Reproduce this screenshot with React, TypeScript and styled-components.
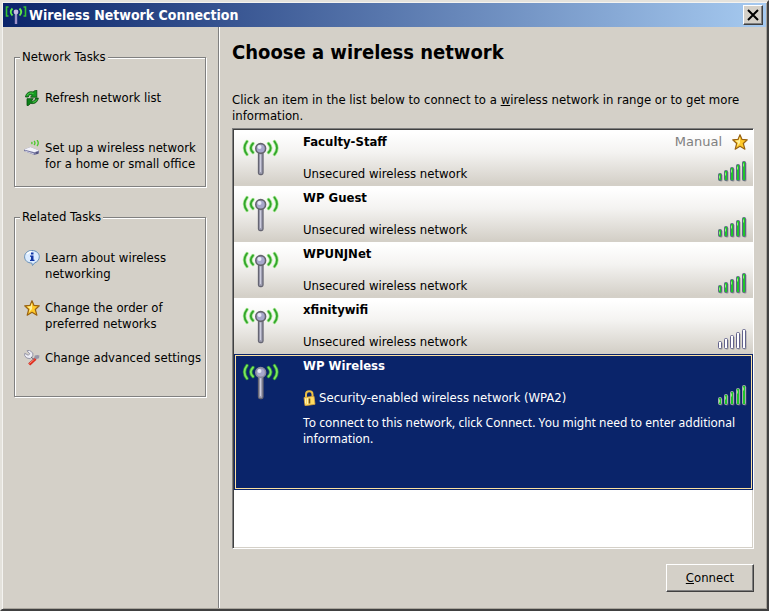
import React from "react";
import styled, { createGlobalStyle, css } from "styled-components";

const face = "#d4d0c8";
const navy = "#0a246a";

const GlobalStyle = createGlobalStyle`
  * { box-sizing: border-box; }
  body {
    margin: 0;
    background: ${face};
    color: #000;
    font: 13px/16px Tahoma, "DejaVu Sans Condensed", "DejaVu Sans", sans-serif;
  }
  h1, h2, p, ul { margin: 0; padding: 0; }
  ul { list-style: none; }
  button { font: inherit; color: inherit; }
  svg { display: block; flex: none; }
`;

const Window = styled.div`
  display: flex;
  flex-direction: column;
  min-height: 100vh;
  padding: 1px;
  background: ${face};
  border: 2px solid;
  border-color: #e4e2dc #404040 #404040 #e4e2dc;
  box-shadow: inset 1px 1px 0 #f4f3f0, inset -1px -1px 0 #a8a49c;
`;

const TitleBar = styled.header`
  display: flex;
  align-items: center;
  gap: 2px;
  height: 24px;
  padding: 0 3px 0 2px;
  color: #fff;
  background: linear-gradient(to right, ${navy}, #a6caf0);
`;

const WindowTitle = styled.h2`
  flex: 1;
  font-size: 14px;
  line-height: 20px;
  font-weight: bold;
`;

const raised = css`
  background: ${face};
  border: 1px solid;
  border-color: #fff #404040 #404040 #fff;
  box-shadow: inset -1px -1px 0 #808080;
`;

const CloseButton = styled.button`
  ${raised}
  display: grid;
  place-items: center;
  width: 20px;
  height: 20px;
  padding: 0;
  color: #000;
`;

const Body = styled.div`
  display: flex;
  flex: 1;
`;

const Sidebar = styled.aside`
  display: flex;
  flex-direction: column;
  gap: 22px;
  flex: none;
  width: 216px;
  padding: 22px 12px 0 11px;
  border-right: 1px solid #808080;
  box-shadow: 1px 0 0 #fff;
`;

const Group = styled.fieldset`
  min-width: 0;
  margin: 0;
  padding: 0 5px 14px;
  border: 1px solid #808080;
  box-shadow: 1px 1px 0 #fff, inset 1px 1px 0 #fff;
`;

const Legend = styled.legend`
  padding: 0 2px;
  background: ${face};
`;

const TaskList = styled.ul`
  display: flex;
  flex-direction: column;
  gap: 18px;
  && { padding: 25px 0 0 4px; }
`;

const TaskLink = styled.a`
  display: flex;
  align-items: flex-start;
  gap: 5px;
  min-height: 32px;
  color: inherit;
  text-decoration: none;
  white-space: pre;
`;

const Main = styled.main`
  display: flex;
  flex-direction: column;
  flex: 1;
  min-width: 0;
  padding: 13px 12px 16px 13px;
`;

const Heading = styled.h1`
  font-size: 20px;
  line-height: 24px;
  font-weight: bold;
`;

const Intro = styled.p`
  && { margin: 28px 0 4px; }
`;

const NetworkList = styled.ul`
  flex: 1;
  background: #fff;
  border: 1px solid;
  border-color: #808080 #fff #fff #808080;
  && { padding: 1px 0 0 1px; }
  box-shadow: inset 1px 1px 0 #404040, inset -1px -1px 0 ${face};
`;

const NetworkRow = styled.button<{ $selected?: boolean }>`
  display: grid;
  grid-template-columns: 61px 1fr auto;
  align-content: start;
  width: 100%;
  min-height: ${(p) => (p.$selected ? 136 : 56)}px;
  padding: 4px 6px 4px 8px;
  border: 0;
  text-align: left;
  background: linear-gradient(#fff 5%, #f4f3f1 40%, ${face} 96%);
  ${(p) =>
    p.$selected &&
    css`
      color: #fff;
      background: ${navy};
      outline: 1px solid #fbe0a0;
      outline-offset: -2px;
    `}
`;

const Antenna = styled.span`
  padding-top: 4px;
`;

const Summary = styled.span`
  display: flex;
  flex-direction: column;
  gap: 16px;
`;

const NetworkName = styled.strong`
  font-weight: bold;
`;

const Security = styled.span`
  display: flex;
  align-items: center;
  gap: 3px;
`;

const Status = styled.span`
  display: flex;
  flex-direction: column;
  align-items: flex-end;
  justify-content: space-between;
  height: 48px;
`;

const Preference = styled.span`
  display: flex;
  align-items: center;
  gap: 10px;
  min-height: 16px;
  margin-right: -1px;
  font-family: Verdana, "DejaVu Sans", sans-serif;
  color: #808080;
`;

const Description = styled.span`
  grid-column: 2 / -1;
  margin-top: 9px;
  font-family: "Noto Sans", sans-serif;
  font-size: 12px;
`;

const Actions = styled.footer`
  display: flex;
  justify-content: flex-end;
  padding-top: 15px;
`;

const PushButton = styled.button`
  ${raised}
  width: 88px;
  height: 28px;
  padding: 0;
`;

const WaveMark = () => (
  <svg width="22" height="20" viewBox="0 0 22 20" fill="none" aria-hidden="true">
    <path d="M3.500 2H1.500v9h2M18.500 2h2v9h-2" stroke="#35c432" strokeWidth="1.600" />
    <path d="M7.500 3.500Q4 7 7.500 10.500M14.500 3.500q3.500 3.500 0 7" stroke="#61e94a" strokeWidth="1.800" />
    <path d="M11 7v12" stroke="#9d91c9" strokeWidth="2.400" />
    <circle cx="11" cy="7" r="2.400" fill="#c9b9e4" />
  </svg>
);

const CloseMark = () => (
  <svg width="12" height="12" viewBox="0 0 12 12" aria-hidden="true">
    <path d="M1 1l10 10M11 1L1 11" stroke="#000" strokeWidth="2" />
  </svg>
);

const waves = "M5 3.500Q0 10 5 16.500M11 5.500q-4.500 4.500 0 9M32.500 3.500q5 6.500 0 13M26.500 5.500q4.500 4.500 0 9";

const AntennaIcon = ({ selected }: { selected?: boolean }) => (
  <svg width="38" height="38" viewBox="0 0 38 38" fill="none" aria-hidden="true">
    <path d={waves} stroke={selected ? "#2d8a3c" : "#a9e996"} strokeWidth="3.400" strokeLinecap="round" />
    <path d={waves} stroke={selected ? "#7be85a" : "#32a52b"} strokeWidth="1.800" strokeLinecap="round" />
    <rect x="16.500" y="14" width="4.500" height="22.500" rx="1.500" fill="#a0a0b4" stroke="#656572" strokeWidth="1.300" />
    <path d="M18.500 16v18" stroke="#cdcddd" />
    <circle cx="18.700" cy="10.500" r="4.900" fill="#a7a7cc" stroke={selected ? "#8a8a9c" : "#65656d"} strokeWidth="1.600" />
    <circle cx="17.500" cy="9" r="2" fill="#e8e8f6" />
  </svg>
);

const SignalIcon = ({ active, selected }: { active: boolean; selected?: boolean }) => (
  <svg width="30" height="22" viewBox="0 0 30 22" aria-hidden="true">
    {[0, 1, 2, 3, 4].map((i) => {
      const x = 1.5 + i * 6;
      const y = 13.5 - i * 3;
      const h = 7 + i * 3;
      return (
        <g key={i}>
          <rect x={x + 1} y={y + 1} width="3" height={h} rx="1" fill="#777" opacity=".6" />
          <rect x={x} y={y} width="3" height={h} rx="1" fill={active ? "#1fc52a" : "#fff"} stroke={selected ? "#aaa5b5" : "#62628b"} />
          {active && <path d={`M${x + 1} ${y + 2}v3`} stroke="#8af276" />}
        </g>
      );
    })}
  </svg>
);

const StarIcon = () => (
  <svg width="16" height="16" viewBox="0 0 16 16" aria-hidden="true">
    <path d="M8 .7l2 4.700 5.300.4-4 3.700 1.600 5.700L8 12.300l-4.800 2.900 1.500-5.700-4-3.700L6 5.400z" fill="#ffc928" stroke="#9a6311" strokeWidth="1.200" strokeLinejoin="round" />
    <path d="M8 2.800L6.700 6.300 3 6.700l3 2-1 3.500L8 9z" fill="#fff09a" />
  </svg>
);

const RefreshIcon = () => (
  <svg width="16" height="16" viewBox="0 0 16 16" aria-hidden="true">
    <g stroke="#064d0c" strokeWidth=".8" strokeLinejoin="round">
      <path d="M1.500 7C2 3 5.500.8 9 2l2.500-1.800h1.300v7H6.500L8.300 5C6 4.200 4.500 5 4.300 7z" fill="#159a22" />
      <path d="M14.300 8c-.4 4-4 6.500-7.500 5.300L4.300 15.500H3V8.700h6.300l-1.900 2.200c2 .8 3.700 0 4.100-2.900z" fill="#0c8118" />
    </g>
    <path d="M3 5.500C4 3 7 2.500 9.500 3.500M12.800 9.500c-.8 2-2.500 2.700-4 2.700" fill="none" stroke="#54cf50" />
  </svg>
);

const RouterIcon = () => (
  <svg width="16" height="16" viewBox="0 0 16 16" fill="none" aria-hidden="true">
    <path d="M10 1q2 2 0 4M13 0q2.500 3 0 6M7.500 2q1 1 0 2" stroke="#49c92c" strokeWidth="1.300" />
    <path d="M0 9.500L6.500 7l8.500 3.500v3L10.500 15 0 11z" fill="#7778a0" />
    <path d="M0 9.500L6.500 7l8.500 3.500-4.500 1.800z" fill="#f3f3fa" />
    <path d="M1 11l9 3" stroke="#c9c9de" />
    <path d="M12 13h2" stroke="#32325f" />
  </svg>
);

const InfoIcon = () => (
  <svg width="16" height="16" viewBox="0 0 16 16" aria-hidden="true">
    <path d="M8 .5c4.200 0 7.300 2.700 7.300 6.300 0 3-2.100 5.200-4.600 6L8.500 15.500 7.800 13C3.500 13 .6 10.400.6 6.800S3.800.5 8 .5z" fill="#dcecff" stroke="#668fb8" />
    <path d="M3 4Q5 1.500 8 1.500" fill="none" stroke="#fff" strokeWidth="1.500" />
    <path d="M7 2.500h2.500v2H7zM6 5.500h3.500v4.300h1V11H6V9.800h1V6.700H6z" fill="#1236a5" />
  </svg>
);

const ToolsIcon = () => (
  <svg width="16" height="16" viewBox="0 0 16 16" aria-hidden="true">
    <path d="M13.500 5l2 .5-.5 2.800-2.500.8-5.800 6L4.500 13l5.800-5.500.5-2z" fill="#9796a8" />
    <path d="M3 .8L5.500.3 8.800 3v3L6.200 8.700 2.700 8 .6 5.500l.2-2.200 3.500 2 1.500-1.500z" fill="#eeeef5" stroke="#85859b" strokeWidth=".8" />
    <path d="M10.500 8l2 1.700-6.300 5.700-2-1.800z" fill="#df291b" />
    <path d="M10.500 9l-5 4.500" stroke="#ff9074" />
    <path d="M7 7l3 2.500" stroke="#66657a" />
  </svg>
);

const LockIcon = () => (
  <svg width="13" height="16" viewBox="0 0 13 16" aria-hidden="true">
    <path d="M3 8V4.500C3 .3 9.500.3 9.500 4.500V7" fill="none" stroke="#e9be44" strokeWidth="2" />
    <path d="M1 7.500l10-1.200 1 8L2 15.700z" fill="#ffdb60" stroke="#d7a33c" strokeWidth=".8" />
    <path d="M2.500 8.500v5M4.500 8v6" stroke="#fff3af" />
    <path d="M6.500 8.500v5" stroke="#695122" strokeWidth="1.600" />
  </svg>
);

type Network = {
  name: string;
  active: boolean;
  manual?: boolean;
  selected?: boolean;
};

const networks: Network[] = [
  { name: "Faculty-Staff", active: true, manual: true },
  { name: "WP Guest", active: true },
  { name: "WPUNJNet", active: true },
  { name: "xfinitywifi", active: false },
  { name: "WP Wireless", active: true, selected: true },
];

const taskGroups = [
  {
    title: "Network Tasks",
    tasks: [
      { icon: <RefreshIcon />, label: "Refresh network list" },
      { icon: <RouterIcon />, label: "Set up a wireless network\nfor a home or small office" },
    ],
  },
  {
    title: "Related Tasks",
    tasks: [
      { icon: <InfoIcon />, label: "Learn about wireless\nnetworking" },
      { icon: <StarIcon />, label: "Change the order of\npreferred networks" },
      { icon: <ToolsIcon />, label: "Change advanced settings" },
    ],
  },
];

export default function App() {
  return (
    <>
      <GlobalStyle />
      <Window>
        <TitleBar>
          <WaveMark />
          <WindowTitle>Wireless Network Connection</WindowTitle>
          <CloseButton type="button" aria-label="Close">
            <CloseMark />
          </CloseButton>
        </TitleBar>
        <Body>
          <Sidebar>
            {taskGroups.map((group) => (
              <Group key={group.title}>
                <Legend>{group.title}</Legend>
                <TaskList>
                  {group.tasks.map((task) => (
                    <li key={task.label}>
                      <TaskLink href="#">
                        {task.icon}
                        <span>{task.label}</span>
                      </TaskLink>
                    </li>
                  ))}
                </TaskList>
              </Group>
            ))}
          </Sidebar>
          <Main>
            <Heading>Choose a wireless network</Heading>
            <Intro>
              Click an item in the list below to connect to a <u>w</u>ireless network in range or to get more information.
            </Intro>
            <NetworkList>
              {networks.map((n) => (
                <li key={n.name}>
                  <NetworkRow type="button" $selected={n.selected} aria-pressed={!!n.selected}>
                    <Antenna>
                      <AntennaIcon selected={n.selected} />
                    </Antenna>
                    <Summary>
                      <NetworkName>{n.name}</NetworkName>
                      <Security>
                        {n.selected && <LockIcon />}
                        {n.selected ? "Security-enabled wireless network (WPA2)" : "Unsecured wireless network"}
                      </Security>
                    </Summary>
                    <Status>
                      <Preference>
                        {n.manual && (
                          <>
                            Manual
                            <StarIcon />
                          </>
                        )}
                      </Preference>
                      <SignalIcon active={n.active} selected={n.selected} />
                    </Status>
                    {n.selected && (
                      <Description>
                        To connect to this network, click Connect. You might need to enter additional information.
                      </Description>
                    )}
                  </NetworkRow>
                </li>
              ))}
            </NetworkList>
            <Actions>
              <PushButton type="button">
                <u>C</u>onnect
              </PushButton>
            </Actions>
          </Main>
        </Body>
      </Window>
    </>
  );
}
